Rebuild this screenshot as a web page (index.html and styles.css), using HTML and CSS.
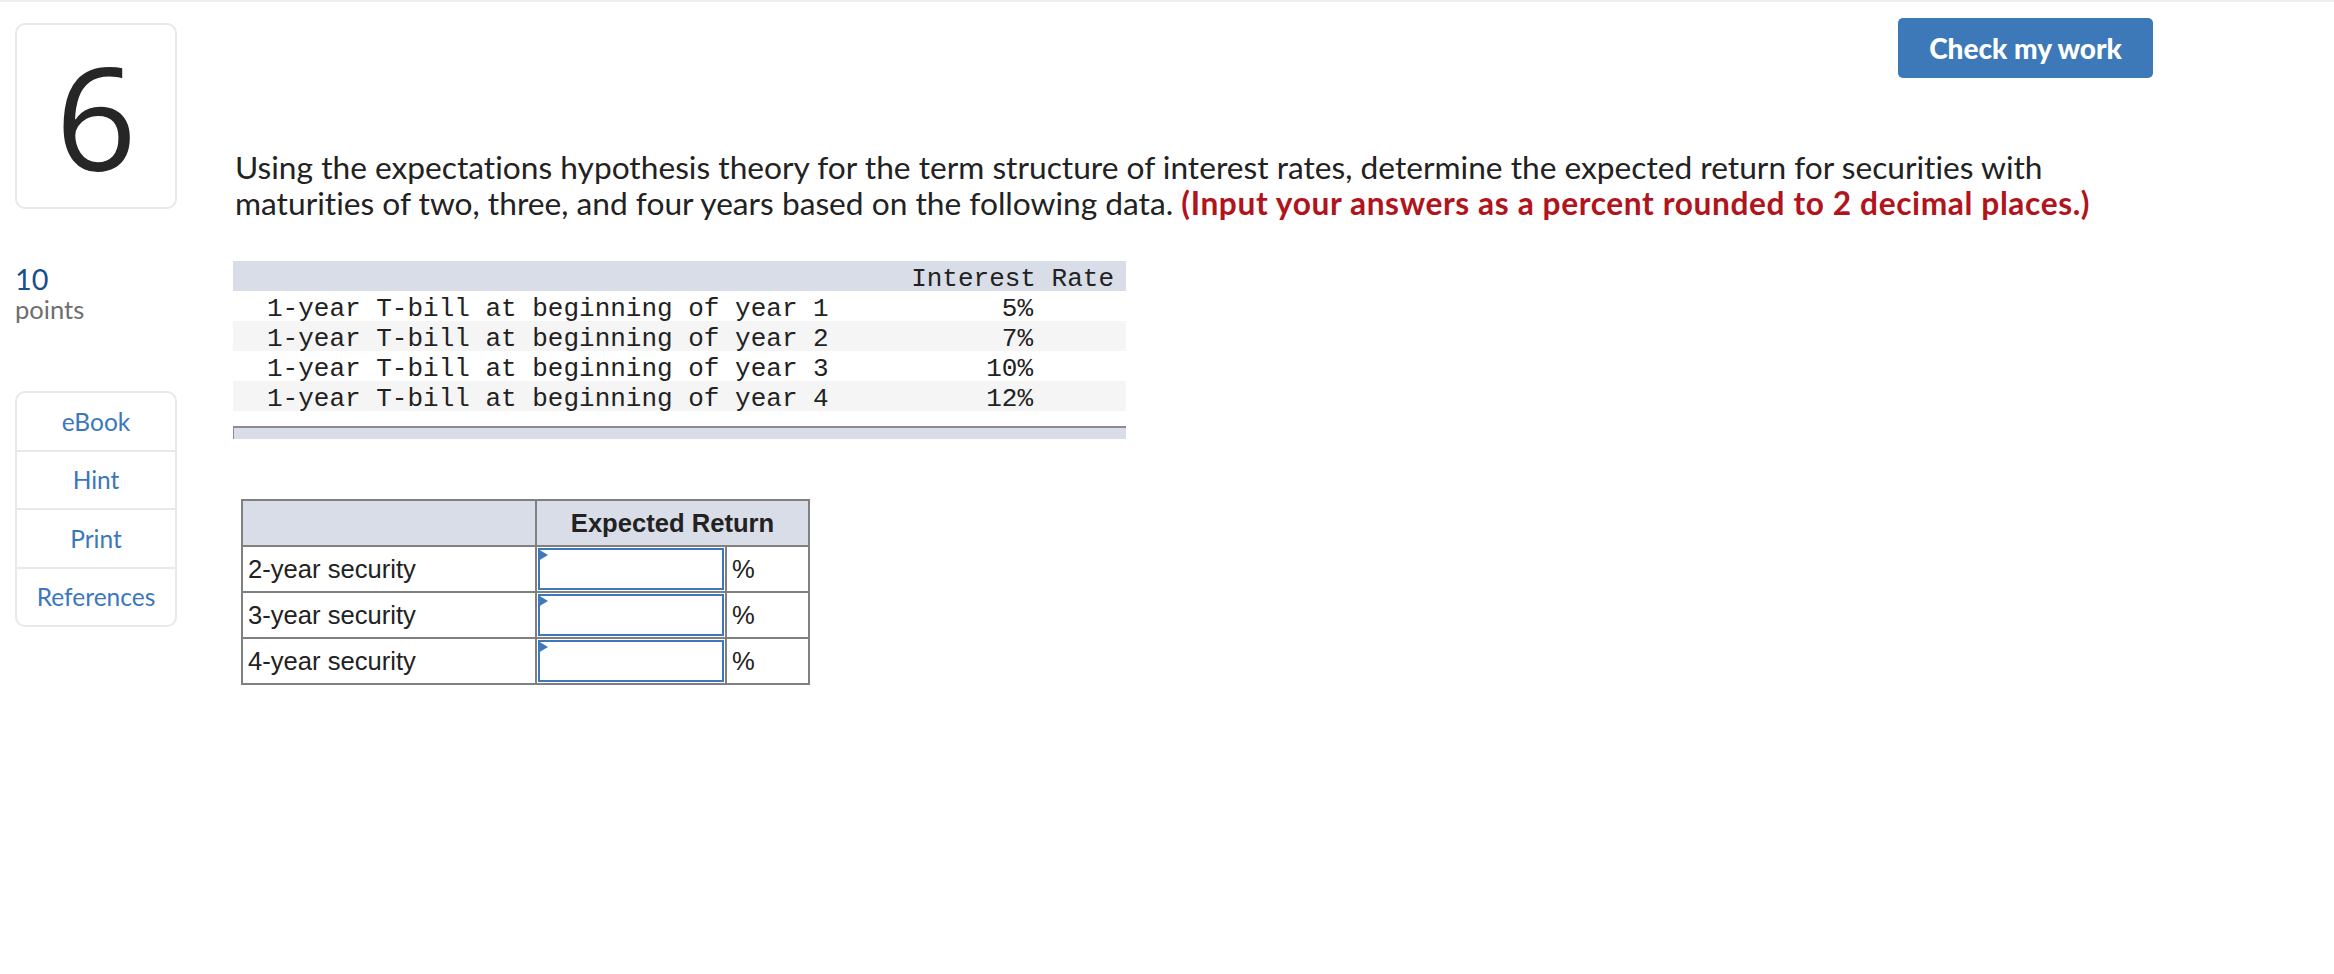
FILE: index.html
```html
<!DOCTYPE html>
<html lang="en">
<head>
<meta charset="utf-8">
<title>Question 6</title>
<link rel="stylesheet" href="styles.css">
</head>
<body>
<div class="topline"></div>
<div class="page">
  <aside class="side">
    <div class="qnum">6</div>
    <div class="pts">
      <div class="pts-num">10</div>
      <div class="pts-label">points</div>
    </div>
    <nav class="tools">
      <a class="tool">eBook</a>
      <a class="tool">Hint</a>
      <a class="tool">Print</a>
      <a class="tool">References</a>
    </nav>
  </aside>
  <main class="main">
    <div class="actions"><button class="check" type="button">Check my work</button></div>
    <p class="question">Using the expectations hypothesis theory for the term structure of interest rates, determine the expected return for securities with maturities of two, three, and four years based on the following data. <strong class="note">(Input your answers as a percent rounded to 2 decimal places.)</strong></p>
    <div class="data">
      <div class="data-row data-head"><span class="data-hcell">Interest Rate</span></div>
      <div class="data-row"><span class="data-label">1-year T-bill at beginning of year 1</span><span class="data-rate">5%</span></div>
      <div class="data-row alt"><span class="data-label">1-year T-bill at beginning of year 2</span><span class="data-rate">7%</span></div>
      <div class="data-row"><span class="data-label">1-year T-bill at beginning of year 3</span><span class="data-rate">10%</span></div>
      <div class="data-row alt"><span class="data-label">1-year T-bill at beginning of year 4</span><span class="data-rate">12%</span></div>
    </div>
    <div class="data-foot"></div>
    <table class="answers">
      <colgroup><col class="c-label"><col class="c-input"><col class="c-pct"></colgroup>
      <thead>
        <tr><th></th><th colspan="2">Expected Return</th></tr>
      </thead>
      <tbody>
        <tr><td class="lbl">2-year security</td><td class="in"><span class="field"><input type="text" aria-label="2-year security"><span class="marker"></span></span></td><td class="pct">%</td></tr>
        <tr><td class="lbl">3-year security</td><td class="in"><span class="field"><input type="text" aria-label="3-year security"><span class="marker"></span></span></td><td class="pct">%</td></tr>
        <tr><td class="lbl">4-year security</td><td class="in"><span class="field"><input type="text" aria-label="4-year security"><span class="marker"></span></span></td><td class="pct">%</td></tr>
      </tbody>
    </table>
  </main>
</div>
</body>
</html>
```
FILE: styles.css
```css
html, body {
  margin: 0;
  padding: 0;
  background: #ffffff;
}
body {
  font-family: Lato, "Liberation Sans", sans-serif;
  color: #222222;
  font-variant-ligatures: none;
}
.topline {
  height: 2px;
  background: #eeeeee;
}
.page {
  display: flex;
  align-items: flex-start;
}
.side {
  flex: 0 0 162px;
  margin-left: 15px;
  display: flex;
  flex-direction: column;
}
.qnum {
  margin-top: 21px;
  height: 182px;
  border: 2px solid #e9e9e9;
  border-radius: 10px;
  display: flex;
  align-items: center;
  justify-content: center;
  font-family: "Open Sans", Lato, sans-serif;
  font-size: 142px;
  line-height: 1;
  color: #262626;
}
.pts {
  margin-top: 54px;
}
.pts-num {
  font-size: 28.8px;
  line-height: 32px;
  color: #1b4e8c;
}
.pts-label {
  font-size: 25.6px;
  line-height: 28px;
  color: #6e6e6e;
}
.tools {
  margin-top: 68px;
  border: 2px solid #e9e9e9;
  border-radius: 10px;
  display: flex;
  flex-direction: column;
}
.tool {
  height: 56.5px;
  display: flex;
  align-items: center;
  justify-content: center;
  color: #3a77bd;
  font-size: 24.5px;
  border-top: 2px solid #e9e9e9;
}
.tool:first-child {
  border-top: 0;
}
.main {
  flex: 1;
  padding-left: 58px;
  padding-right: 181px;
}
.actions {
  display: flex;
  justify-content: flex-end;
  margin-top: 16px;
}
.check {
  width: 255px;
  height: 60px;
  background: #3d79b9;
  color: #ffffff;
  border: 0;
  border-radius: 5px;
  font-family: Lato, sans-serif;
  font-weight: 900;
  font-size: 28px;
  padding: 0;
}
.question {
  margin: 72px 0 0;
  max-width: 1860px;
  font-size: 31.7px;
  line-height: 35.7px;
}
.note {
  color: #b0141c;
  font-weight: 700;
  letter-spacing: 0.6px;
}
.data {
  margin-top: 40px;
  margin-left: -2px;
  width: 893px;
  font-family: "Liberation Mono", "Courier New", monospace;
  font-size: 26px;
  color: #222222;
}
.data-row {
  display: flex;
  height: 30px;
  box-sizing: border-box;
  padding-top: 6px;
  line-height: 24px;
  white-space: pre;
}
.data-head {
  background: #d9dde8;
  justify-content: flex-end;
  padding-right: 12px;
}
.data-row.alt {
  background: #f5f5f5;
}
.data-label {
  flex: 1;
  padding-left: 34px;
}
.data-rate {
  padding-right: 93px;
  text-align: right;
}
.data-foot {
  margin-top: 15px;
  margin-left: -2px;
  width: 892px;
  height: 11px;
  background: #d9dde8;
  border-top: 2px solid #8c8c8c;
  border-left: 1px solid #8c8c8c;
}
.answers {
  margin-top: 60px;
  margin-left: 6px;
  border-collapse: collapse;
  border: 2px solid #808080;
  font-family: "Liberation Sans", Arial, sans-serif;
  font-size: 25.6px;
  color: #222222;
  width: 567px;
  table-layout: fixed;
}
.c-label { width: 294px; }
.c-input { width: 190px; }
.c-pct { width: 83px; }
.answers th,
.answers td {
  border: 2px solid #808080;
  padding: 0 5px;
  box-sizing: border-box;
}
.answers th {
  background: #d9dde8;
  font-weight: 700;
  text-align: center;
  height: 46px;
}
.answers td {
  height: 46px;
}
.answers td.lbl {
  text-align: left;
  padding-left: 5px;
}
.answers td.in {
  padding: 1px;
}
.answers td.pct {
  padding-left: 5px;
}
.field {
  position: relative;
  display: block;
}
.field input {
  display: block;
  width: 100%;
  height: 42px;
  box-sizing: border-box;
  border: 2px solid #3e77bb;
  margin: 0;
  padding: 0 6px;
  font-family: "Liberation Sans", Arial, sans-serif;
  font-size: 25.6px;
  outline: none;
  background: #ffffff;
}
.marker {
  position: absolute;
  left: 0;
  top: 1px;
  width: 0;
  height: 0;
  border-left: 10px solid #3e77bb;
  border-top: 6px solid transparent;
  border-bottom: 6px solid transparent;
}
```
